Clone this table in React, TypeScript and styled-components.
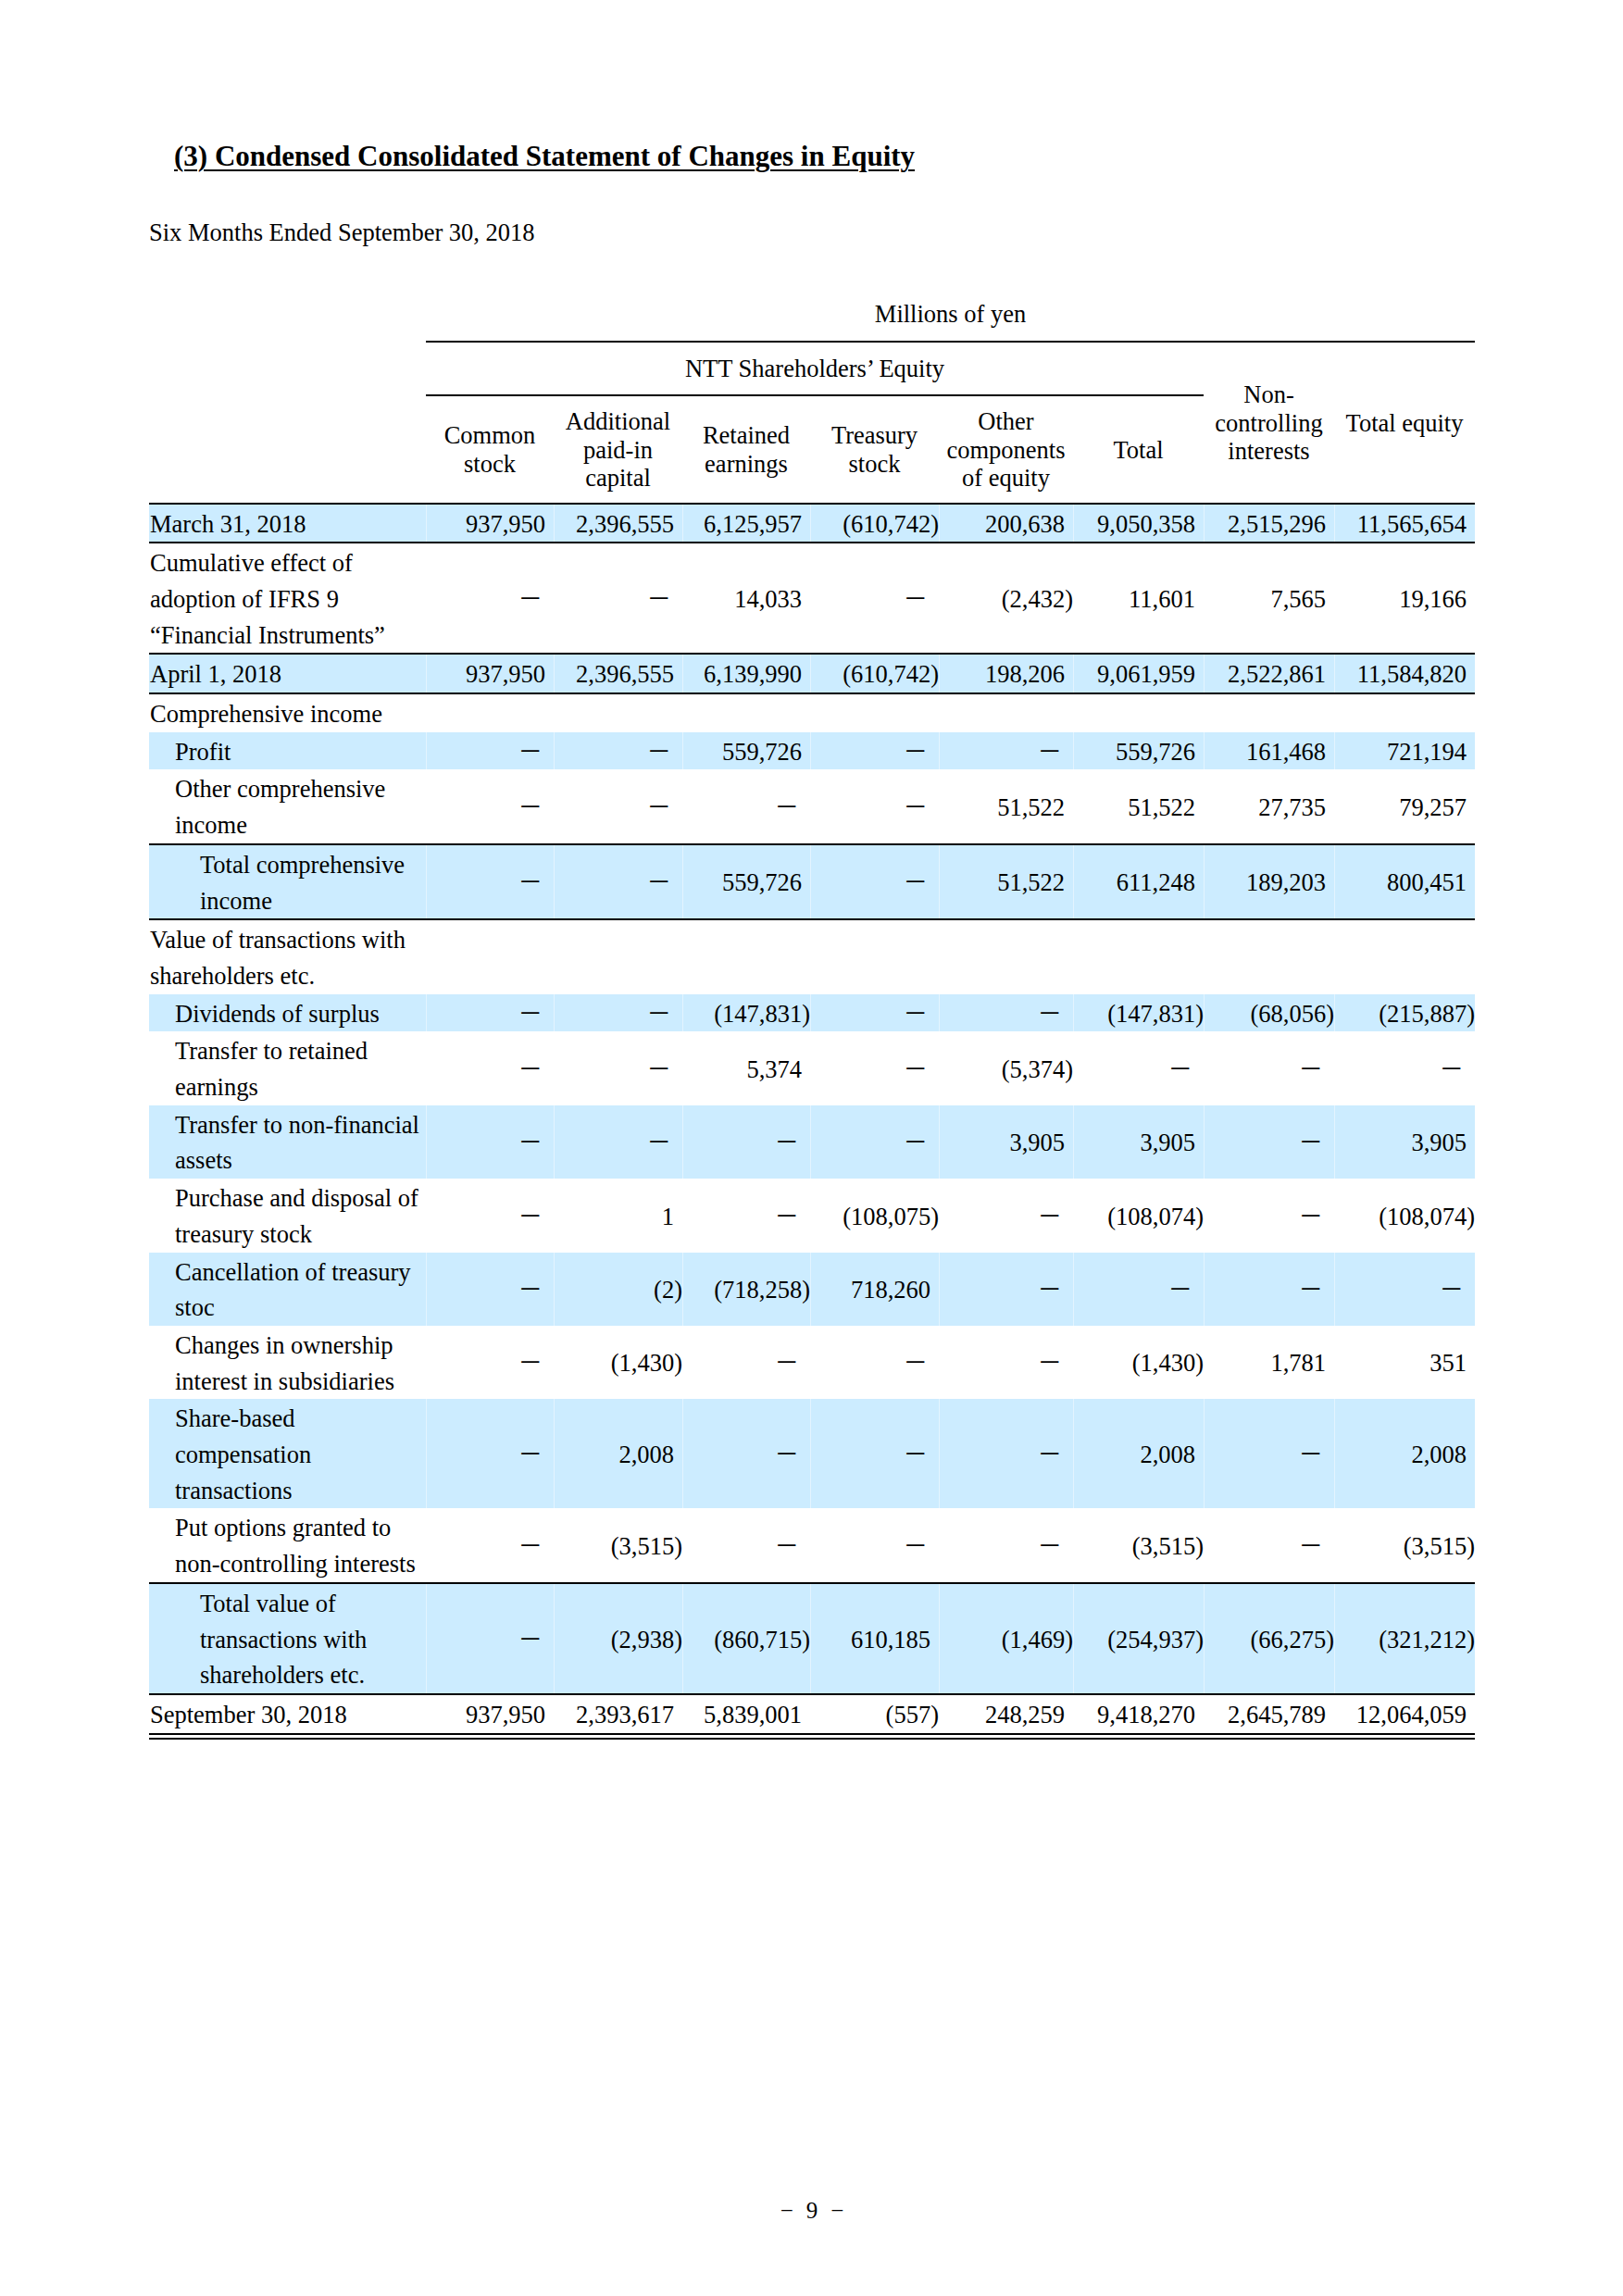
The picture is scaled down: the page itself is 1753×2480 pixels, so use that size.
import React from "react";
import styled, { createGlobalStyle, css } from "styled-components";

const GlobalStyle = createGlobalStyle`
  html, body {
    margin: 0;
    padding: 0;
    background: #ffffff;
  }
  body {
    font-family: "Liberation Serif", "Times New Roman", serif;
    color: #000000;
  }
`;

const Page = styled.div`
  width: 1432px;
  padding: 149px 0 60px 161px;
`;

const Title = styled.h1`
  margin: 0;
  padding-left: 27px;
  font-size: 31px;
  line-height: 40px;
  font-weight: 700;
  text-decoration: underline;
  text-decoration-thickness: 2px;
  text-underline-offset: 4px;
`;

const Period = styled.p`
  margin: 42px 0 49px;
  font-size: 26.5px;
  line-height: 40px;
`;

const Table = styled.table`
  width: 1432px;
  table-layout: fixed;
  border-collapse: collapse;
  font-size: 26.5px;
`;

const Rule = "2px solid #000";

const Blank = styled.th`
  padding: 0;
`;

const UnitCell = styled.th`
  font-weight: 400;
  text-align: center;
  padding: 0 0 10px;
  line-height: 38px;
`;

const GroupCell = styled.th`
  font-weight: 400;
  text-align: center;
  padding: 8px 0;
  line-height: 40px;
  border-top: ${Rule};
  border-bottom: ${Rule};
`;

const ColHead = styled.th<{ $top?: boolean }>`
  font-weight: 400;
  text-align: center;
  vertical-align: middle;
  padding: 12px 2px 11px;
  line-height: 30.5px;
  white-space: nowrap;
  ${(p) =>
    p.$top &&
    css`
      border-top: ${Rule};
    `}
`;

const Row = styled.tr<{ $shaded?: boolean; $ruleTop?: boolean; $ruleBottom?: boolean; $final?: boolean }>`
  background: ${(p) => (p.$shaded ? "#ccecff" : "transparent")};
  ${(p) =>
    p.$ruleTop &&
    css`
      border-top: ${Rule};
    `}
  ${(p) =>
    p.$ruleBottom &&
    css`
      border-bottom: ${Rule};
    `}
  ${(p) =>
    p.$final &&
    css`
      border-bottom: 7px double #000;
    `}
`;

const LabelCell = styled.td<{ $level: number }>`
  padding: 2px 0 0 ${(p) => 1 + p.$level * 27}px;
  line-height: 38.7px;
  text-align: left;
  vertical-align: middle;
  white-space: nowrap;
`;

const NumCell = styled.td<{ $shaded?: boolean }>`
  padding: 2px 9px 0 0;
  line-height: 38.7px;
  text-align: right;
  vertical-align: middle;
  white-space: nowrap;
  ${(p) =>
    p.$shaded &&
    css`
      box-shadow: inset 1px 0 0 rgba(255, 255, 255, 0.45);
    `}
`;

const Dash = styled.span`
  font-family: "Noto Sans CJK JP", "Liberation Serif", serif;
  line-height: 0;
  margin-right: 3px;
`;

const Paren = styled.span`
  margin-right: -9px;
`;

const PageNumber = styled.div`
  margin-top: 489px;
  display: flex;
  justify-content: center;
  gap: 14px;
  font-size: 25px;
  line-height: 40px;
`;

type Line = {
  label: string[];
  level: number;
  values?: string[];
  shaded?: boolean;
  ruleTop?: boolean;
  ruleBottom?: boolean;
  final?: boolean;
};

const D = "-";

const rows: Line[] = [
  {
    label: ["March 31, 2018"],
    level: 0,
    values: ["937,950", "2,396,555", "6,125,957", "(610,742)", "200,638", "9,050,358", "2,515,296", "11,565,654"],
    shaded: true,
    ruleTop: true,
    ruleBottom: true,
  },
  {
    label: ["Cumulative effect of", "adoption of IFRS 9", "\u201cFinancial Instruments\u201d"],
    level: 0,
    values: [D, D, "14,033", D, "(2,432)", "11,601", "7,565", "19,166"],
  },
  {
    label: ["April 1, 2018"],
    level: 0,
    values: ["937,950", "2,396,555", "6,139,990", "(610,742)", "198,206", "9,061,959", "2,522,861", "11,584,820"],
    shaded: true,
    ruleTop: true,
    ruleBottom: true,
  },
  { label: ["Comprehensive income"], level: 0 },
  {
    label: ["Profit"],
    level: 1,
    values: [D, D, "559,726", D, D, "559,726", "161,468", "721,194"],
    shaded: true,
  },
  {
    label: ["Other comprehensive", "income"],
    level: 1,
    values: [D, D, D, D, "51,522", "51,522", "27,735", "79,257"],
  },
  {
    label: ["Total comprehensive", "income"],
    level: 2,
    values: [D, D, "559,726", D, "51,522", "611,248", "189,203", "800,451"],
    shaded: true,
    ruleTop: true,
    ruleBottom: true,
  },
  { label: ["Value of transactions with", "shareholders etc."], level: 0 },
  {
    label: ["Dividends of surplus"],
    level: 1,
    values: [D, D, "(147,831)", D, D, "(147,831)", "(68,056)", "(215,887)"],
    shaded: true,
  },
  {
    label: ["Transfer to retained", "earnings"],
    level: 1,
    values: [D, D, "5,374", D, "(5,374)", D, D, D],
  },
  {
    label: ["Transfer to non-financial", "assets"],
    level: 1,
    values: [D, D, D, D, "3,905", "3,905", D, "3,905"],
    shaded: true,
  },
  {
    label: ["Purchase and disposal of", "treasury stock"],
    level: 1,
    values: [D, "1", D, "(108,075)", D, "(108,074)", D, "(108,074)"],
  },
  {
    label: ["Cancellation of treasury", "stoc"],
    level: 1,
    values: [D, "(2)", "(718,258)", "718,260", D, D, D, D],
    shaded: true,
  },
  {
    label: ["Changes in ownership", "interest in subsidiaries"],
    level: 1,
    values: [D, "(1,430)", D, D, D, "(1,430)", "1,781", "351"],
  },
  {
    label: ["Share-based", "compensation", "transactions"],
    level: 1,
    values: [D, "2,008", D, D, D, "2,008", D, "2,008"],
    shaded: true,
  },
  {
    label: ["Put options granted to", "non-controlling interests"],
    level: 1,
    values: [D, "(3,515)", D, D, D, "(3,515)", D, "(3,515)"],
  },
  {
    label: ["Total value of", "transactions with", "shareholders etc."],
    level: 2,
    values: [D, "(2,938)", "(860,715)", "610,185", "(1,469)", "(254,937)", "(66,275)", "(321,212)"],
    shaded: true,
    ruleTop: true,
    ruleBottom: true,
  },
  {
    label: ["September 30, 2018"],
    level: 0,
    values: ["937,950", "2,393,617", "5,839,001", "(557)", "248,259", "9,418,270", "2,645,789", "12,064,059"],
    final: true,
  },
];

const columnWidths = [299, 138, 139, 138, 139, 145, 141, 141, 152];

const equityHeads: string[][] = [
  ["Common", "stock"],
  ["Additional", "paid-in", "capital"],
  ["Retained", "earnings"],
  ["Treasury", "stock"],
  ["Other", "components", "of equity"],
  ["Total"],
];

function renderLines(lines: string[]) {
  return lines.map((l, i) => (
    <React.Fragment key={i}>
      {i > 0 && <br />}
      {l}
    </React.Fragment>
  ));
}

function renderValue(v: string) {
  if (v === D) return <Dash>{"\uFF0D"}</Dash>;
  if (v.startsWith("(")) {
    return (
      <>
        {v.slice(0, -1)}
        <Paren>)</Paren>
      </>
    );
  }
  return v;
}

export default function App() {
  return (
    <>
      <GlobalStyle />
      <Page>
        <Title>(3) Condensed Consolidated Statement of Changes in Equity</Title>
        <Period>Six Months Ended September 30, 2018</Period>
        <Table>
          <colgroup>
            {columnWidths.map((w, i) => (
              <col key={i} style={{ width: w }} />
            ))}
          </colgroup>
          <thead>
            <tr>
              <Blank />
              <UnitCell colSpan={8}>Millions of yen</UnitCell>
            </tr>
            <tr>
              <Blank />
              <GroupCell colSpan={6}>NTT Shareholders{"\u2019"} Equity</GroupCell>
              <ColHead rowSpan={2} $top>
                {renderLines(["Non-", "controlling", "interests"])}
              </ColHead>
              <ColHead rowSpan={2} $top>
                Total equity
              </ColHead>
            </tr>
            <tr>
              <Blank />
              {equityHeads.map((h, i) => (
                <ColHead key={i}>{renderLines(h)}</ColHead>
              ))}
            </tr>
          </thead>
          <tbody>
            {rows.map((r, i) => (
              <Row key={i} $shaded={r.shaded} $ruleTop={r.ruleTop} $ruleBottom={r.ruleBottom} $final={r.final}>
                <LabelCell $level={r.level}>{renderLines(r.label)}</LabelCell>
                {(r.values ?? Array(8).fill("")).map((v, j) => (
                  <NumCell key={j} $shaded={r.shaded}>
                    {v ? renderValue(v) : null}
                  </NumCell>
                ))}
              </Row>
            ))}
          </tbody>
        </Table>
        <PageNumber>
          <span>{"\u2212"}</span>
          <span>9</span>
          <span>{"\u2212"}</span>
        </PageNumber>
      </Page>
    </>
  );
}
